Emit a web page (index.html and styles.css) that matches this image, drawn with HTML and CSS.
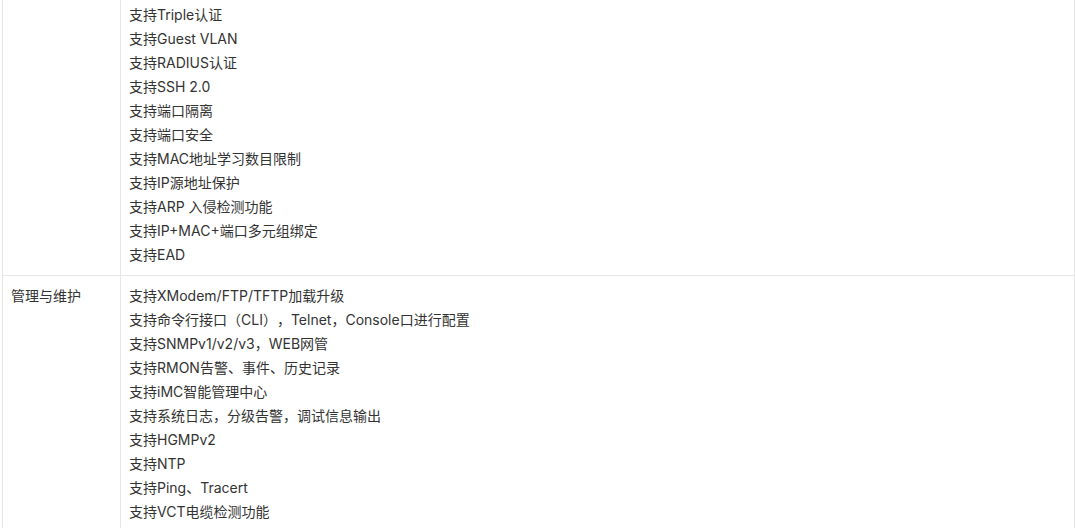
FILE: index.html
```html
<!DOCTYPE html>
<html lang="zh-CN">
<head>
    <meta charset="UTF-8">
    <meta name="viewport" content="width=device-width, initial-scale=1.0">
    <title>规格参数</title>
    <link rel="stylesheet" href="styles.css">
</head>
<body>
    <table class="spec-table">
        <tr class="row-cut">
            <td class="spec-name"></td>
            <td class="spec-value">
                <p>支持Triple认证</p>
                <p>支持Guest VLAN</p>
                <p>支持RADIUS认证</p>
                <p>支持SSH 2.0</p>
                <p>支持端口隔离</p>
                <p>支持端口安全</p>
                <p>支持MAC地址学习数目限制</p>
                <p>支持IP源地址保护</p>
                <p>支持ARP 入侵检测功能</p>
                <p>支持IP+MAC+端口多元组绑定</p>
                <p>支持EAD</p>
            </td>
        </tr>
        <tr>
            <td class="spec-name">管理与维护</td>
            <td class="spec-value">
                <p>支持XModem/FTP/TFTP加载升级</p>
                <p>支持命令行接口（CLI），Telnet，Console口进行配置</p>
                <p>支持SNMPv1/v2/v3，WEB网管</p>
                <p>支持RMON告警、事件、历史记录</p>
                <p>支持iMC智能管理中心</p>
                <p>支持系统日志，分级告警，调试信息输出</p>
                <p>支持HGMPv2</p>
                <p>支持NTP</p>
                <p>支持Ping、Tracert</p>
                <p>支持VCT电缆检测功能</p>
            </td>
        </tr>
    </table>
</body>
</html>
```

FILE: styles.css
```css
body {
    margin: 0;
    background: #fff;
    font-family: Inter, "Noto Sans CJK SC", sans-serif;
    font-size: 14px;
    color: #333;
    text-spacing-trim: space-all;
}
.spec-table {
    border-collapse: collapse;
    margin-left: 2px;
    width: 1073px;
}
.spec-table td {
    border: 1px solid #e6e6e6;
    padding: 8px;
    line-height: 24px;
    vertical-align: top;
}
.spec-name {
    width: 101px;
}
.row-cut td {
    border-top: none;
    padding-top: 3px;
}
.spec-value p {
    margin: 0;
}
```
